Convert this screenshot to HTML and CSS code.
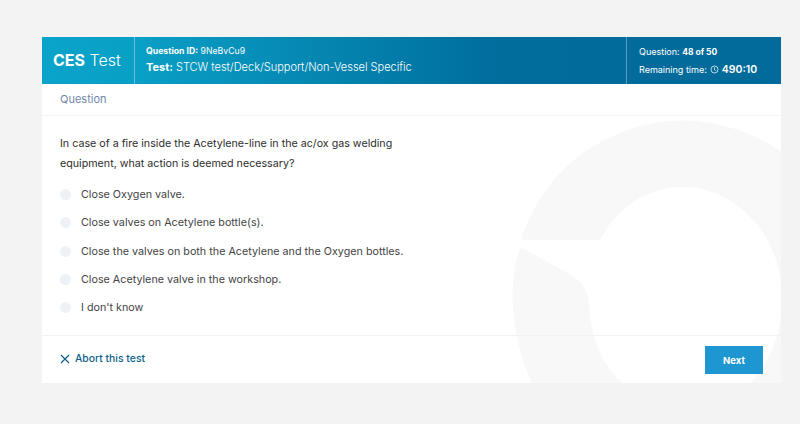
FILE: index.html
```html
<!DOCTYPE html>
<html lang="en">
<head>
  <meta charset="UTF-8" />
  <title>CES Test</title>
  <link rel="stylesheet" href="styles.css">
</head>
<body>
  <div class="card">
    <svg class="watermark" viewBox="42 37 739 346" aria-hidden="true">
      <path d="M524 240 Q521 240 522 236 A170 170 0 0 1 853 291 A170 170 0 0 1 683 461 C600 461 550 430 532 383 C514 345 506 290 519 251 Q520 247 524 249 L566 272 C584 282 588 290 589 305 C591 340 603 365 622 383 C650 410 725 410 750 383 C770 362 782 335 782 297 C782 235 735 187 683 187 C645 187 616 210 602 237 Q601 240 598 240 Z"/>
    </svg>
    <header class="top">
      <div class="brand"><b>CES</b> Test</div>
      <div class="info">
        <div class="info-id"><b>Question ID:</b> 9NeBvCu9</div>
        <div class="info-test"><b>Test:</b> STCW test/Deck/Support/Non-Vessel Specific</div>
      </div>
      <div class="status">
        <div>Question: <b class="status-count">48 of 50</b></div>
        <div class="status-time">Remaining time:
          <svg class="clock" viewBox="0 0 10 10"><circle cx="5" cy="5" r="3.9"/><path d="M5 2.6V5.2L6.4 6.6"/></svg>
          <b>490:10</b>
        </div>
      </div>
    </header>
    <div class="section-title">Question</div>
    <div class="body">
      <p class="question">In case of a fire inside the Acetylene-line in the ac/ox gas welding equipment, what action is deemed necessary?</p>
      <ul class="options">
        <li><span class="radio"></span>Close Oxygen valve.</li>
        <li><span class="radio"></span>Close valves on Acetylene bottle(s).</li>
        <li><span class="radio"></span>Close the valves on both the Acetylene and the Oxygen bottles.</li>
        <li><span class="radio"></span>Close Acetylene valve in the workshop.</li>
        <li><span class="radio"></span>I don't know</li>
      </ul>
    </div>
    <footer class="bottom">
      <a class="abort" href="#">
        <svg class="abort-x" viewBox="0 0 10 10"><path d="M1 1L9 9M9 1L1 9"/></svg>
        Abort this test
      </a>
      <button class="next">Next</button>
    </footer>
  </div>
</body>
</html>
```

FILE: styles.css
```css
body {
  margin: 0;
  height: 424px;
  overflow: hidden;
  background: #f3f3f3;
  font-family: "Inter", sans-serif;
  color: #333;
}
.card {
  position: relative;
  overflow: hidden;
  width: 739px;
  height: 346px;
  margin: 37px 0 0 42px;
  background: #fff;
}
.watermark {
  position: absolute;
  left: 0;
  top: 0;
  width: 739px;
  height: 346px;
  fill: #f8f8f8;
}
.top {
  position: relative;
  display: flex;
  height: 47px;
  color: #fff;
  background: linear-gradient(90deg, #0aa3c9 0%, #0aa0c6 12%, #006d9d 62%, #036b9b 100%);
}
.brand {
  width: 93px;
  box-sizing: border-box;
  padding-left: 11px;
  border-right: 1px solid #6fbdd6;
  font-size: 16px;
  font-weight: 300;
  line-height: 47px;
}
.brand b {
  font-weight: 700;
}
.info {
  flex: 1;
  padding: 8px 0 0 11px;
}
.info-id {
  font-size: 8.7px;
  line-height: 13px;
}
.info-test {
  margin-top: 2px;
  font-size: 11px;
  font-weight: 300;
  line-height: 15px;
}
.info-test b {
  font-weight: 700;
}
.status {
  width: 155px;
  box-sizing: border-box;
  padding: 8px 0 0 12px;
  border-left: 1px solid #5a9dbd;
  background: #036b9b;
  font-size: 9px;
  line-height: 13px;
}
.status-count {
  font-size: 8.5px;
}
.status-time {
  display: flex;
  align-items: center;
  gap: 3px;
  margin-top: 3px;
  height: 15px;
}
.status-time b {
  font-size: 10.5px;
  font-weight: 600;
}
.clock {
  width: 9px;
  height: 9px;
  fill: none;
  stroke: #fff;
  stroke-width: 0.8;
}
.section-title {
  position: relative;
  height: 31px;
  padding-left: 18px;
  border-bottom: 1px solid #f0f4f8;
  color: #7286a8;
  font-size: 11px;
  line-height: 31px;
}
.body {
  position: relative;
  height: 219px;
  padding: 0 18px;
}
.question {
  width: 345px;
  margin: 0;
  padding-top: 18px;
  font-size: 10.7px;
  line-height: 19.5px;
  color: #2d2d2d;
}
.options {
  margin: 7.5px 0 0;
  padding: 0;
  list-style: none;
}
.options li {
  display: flex;
  align-items: center;
  height: 28.25px;
  font-size: 10.75px;
  color: #444;
}
.radio {
  width: 11px;
  height: 11px;
  margin-right: 10px;
  border-radius: 50%;
  background: #eef2f6;
}
.bottom {
  position: relative;
  display: flex;
  justify-content: space-between;
  align-items: flex-start;
  height: 47px;
  padding: 10px 18px 0;
  border-top: 1px solid #f0f4f8;
  box-sizing: border-box;
}
.abort {
  display: flex;
  align-items: center;
  gap: 5px;
  margin-top: 6px;
  color: #0d5f8c;
  font-size: 10.4px;
  font-weight: 500;
  line-height: 14px;
  text-decoration: none;
}
.abort-x {
  width: 10px;
  height: 10px;
  fill: none;
  stroke: #0d5f8c;
  stroke-width: 1.2;
}
.next {
  width: 58px;
  height: 28px;
  border: 0;
  background: #1e96d2;
  color: #fff;
  font-family: inherit;
  font-size: 9.5px;
  font-weight: 700;
}
```
